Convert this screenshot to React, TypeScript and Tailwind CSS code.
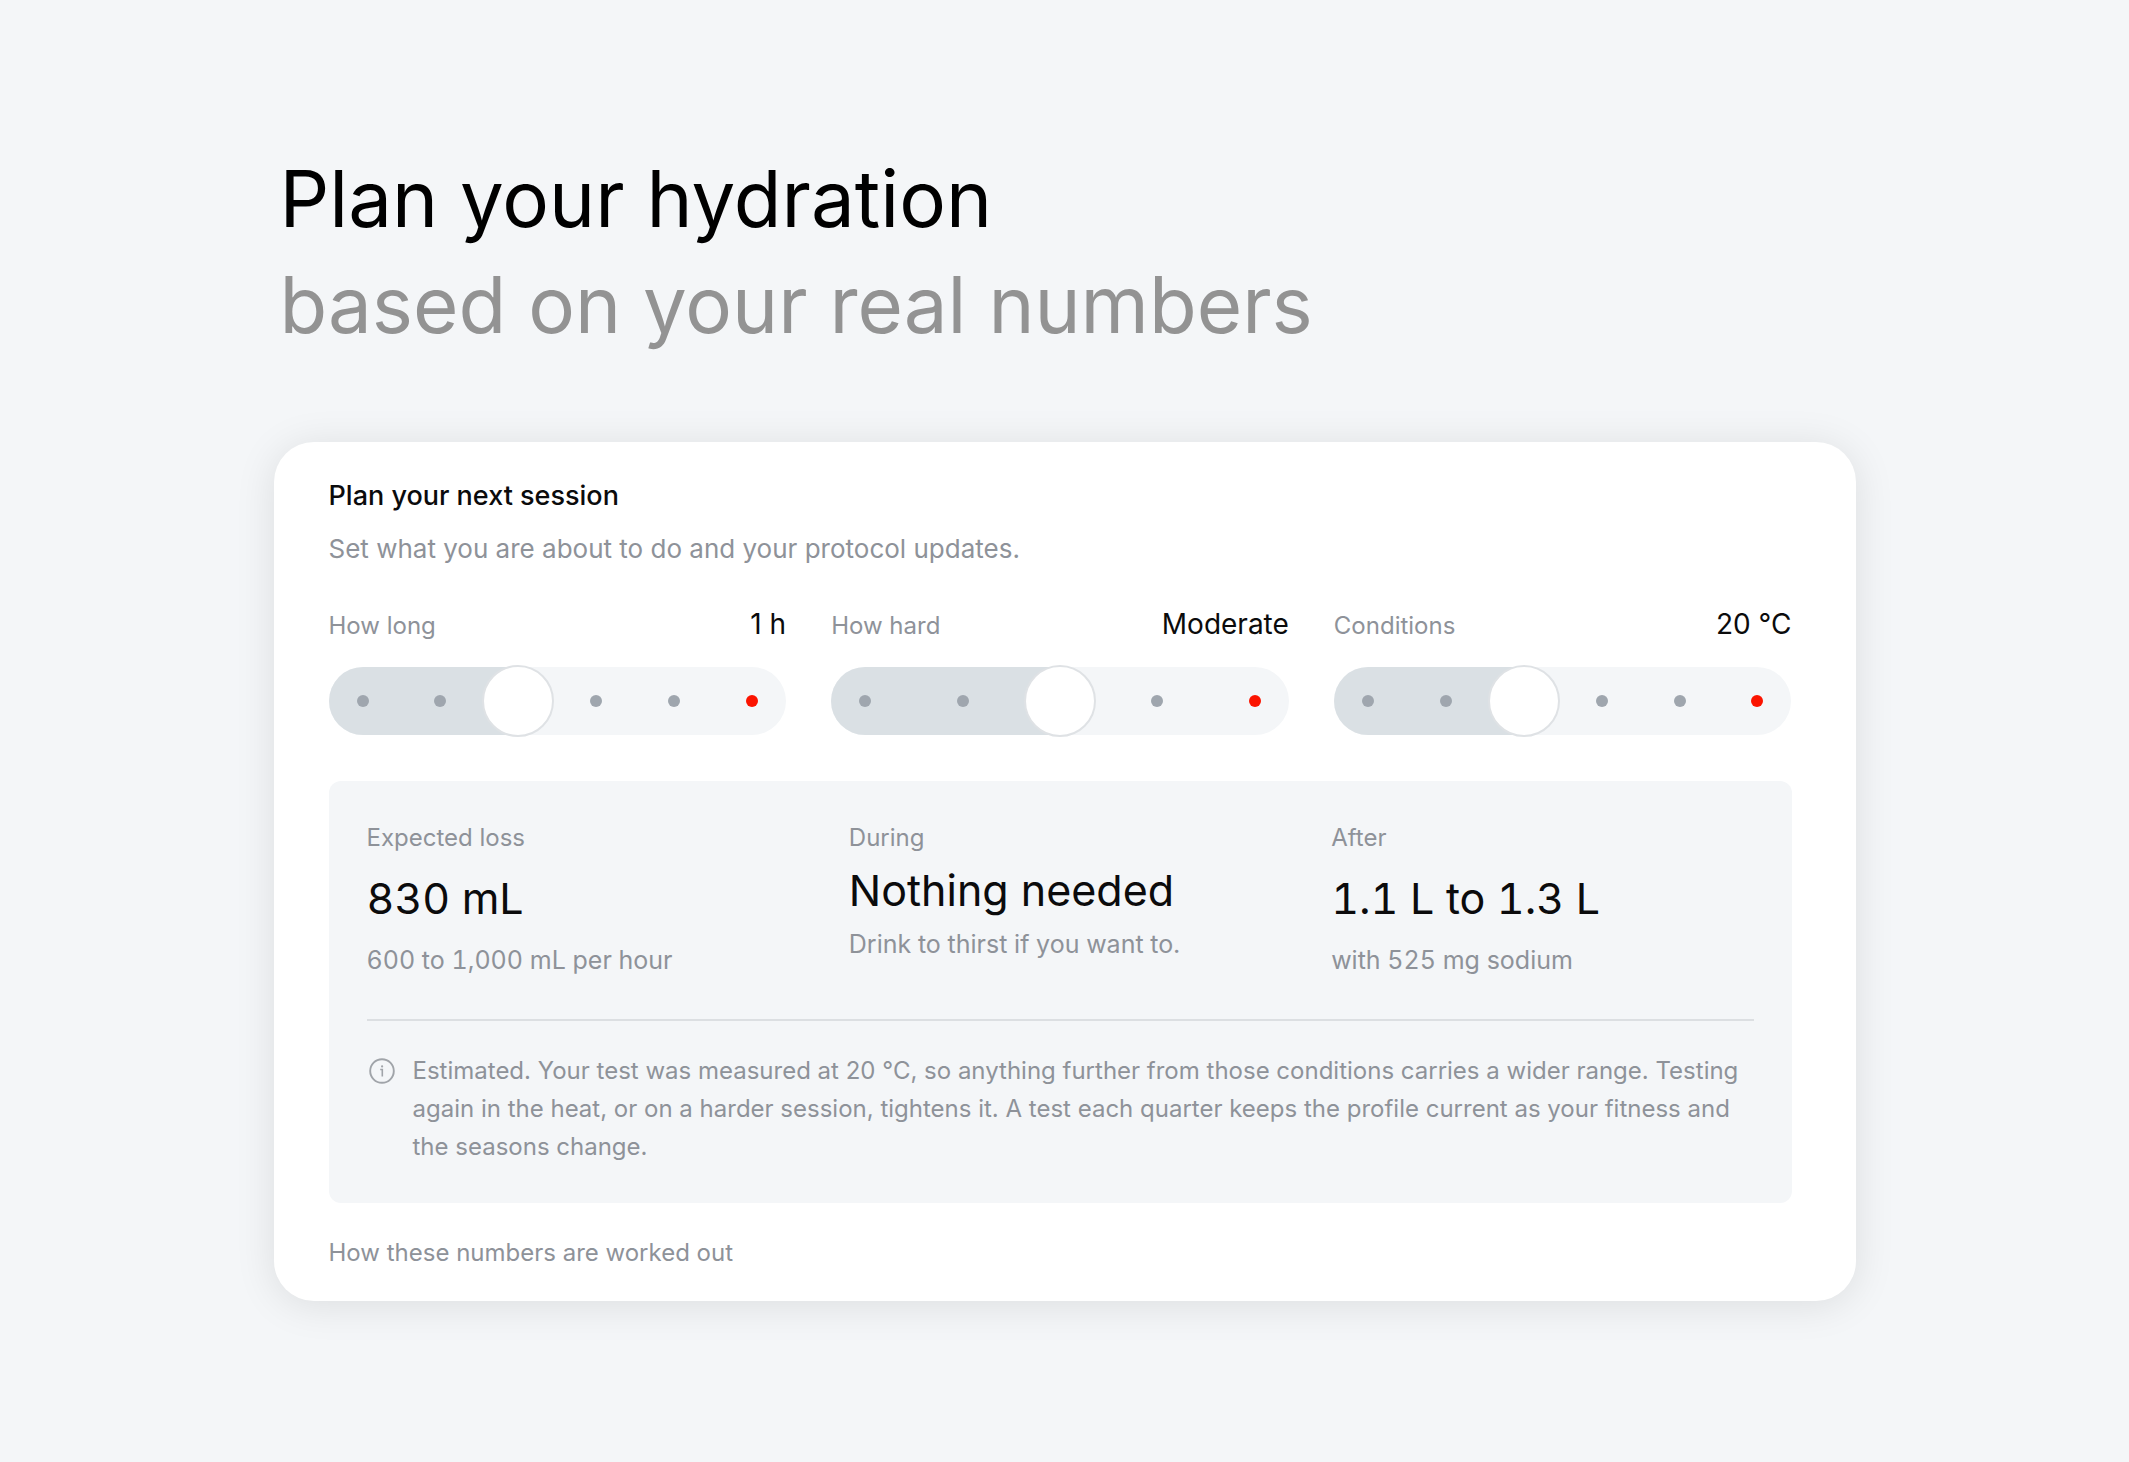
import React from "react";

interface StepSliderProps {
  id: string;
  label: string;
  steps: string[];
  value: number;
  onChange: (val: number) => void;
}

interface ResultProps {
  label: string;
  value: string;
  note: string;
  compact?: boolean;
}

const DURATIONS = ["20 min", "40 min", "1 h", "2 h", "3 h", "4 h"];
const EFFORTS = ["Very easy", "Easy", "Moderate", "Hard", "Very hard"];
const TEMPERATURES = ["10 °C", "15 °C", "20 °C", "25 °C", "30 °C", "35 °C"];

function StepSlider({ id, label, steps, value, onChange }: StepSliderProps) {
  const last = steps.length - 1;
  const ratio = value / last;

  return (
    <div>
      <div className="flex items-baseline justify-between leading-9">
        <label htmlFor={id} className="text-[24px] text-[#8e9299]">
          {label}
        </label>
        <output htmlFor={id} className="text-[28px] text-[#0b0b0c]">
          {steps[value]}
        </output>
      </div>

      <div className="relative mt-[23px] h-[68px] rounded-full bg-[#f4f6f8]">
        {/* filled part, ends under the thumb */}
        <div
          className="h-full rounded-l-full bg-[#dae0e4]"
          style={{ width: `calc(34px + (100% - 68px) * ${ratio})` }}
        />

        <div className="pointer-events-none absolute inset-0 flex items-center justify-between px-7">
          {steps.map((step, i) => (
            <span
              key={step}
              className={`size-3 rounded-full ${i === last ? "bg-[#fb1400]" : "bg-[#9fa6ae]"}`}
            />
          ))}
        </div>

        <input
          id={id}
          type="range"
          min={0}
          max={last}
          step={1}
          value={value}
          aria-valuetext={steps[value]}
          onChange={(e) => onChange(Number(e.target.value))}
          className="absolute -inset-0.5 cursor-pointer appearance-none bg-transparent [&::-webkit-slider-thumb]:size-[72px] [&::-webkit-slider-thumb]:appearance-none [&::-webkit-slider-thumb]:rounded-full [&::-webkit-slider-thumb]:border-2 [&::-webkit-slider-thumb]:border-[#dfe2e5] [&::-webkit-slider-thumb]:bg-white"
        />
      </div>
    </div>
  );
}

function Result({ label, value, note, compact }: ResultProps) {
  return (
    <div className="flex flex-col gap-3.5">
      <h3 className="text-[24px] leading-8 text-[#8e9299]">{label}</h3>
      <p
        className={`text-[43px] text-[#0b0b0c] ${
          compact ? "leading-[44px]" : "leading-[60px] tabular-nums"
        }`}
      >
        {value}
      </p>
      <p className="text-[25px] leading-9 text-[#8e9299] tabular-nums">{note}</p>
    </div>
  );
}

export default function App() {
  const [duration, setDuration] = React.useState(2);
  const [effort, setEffort] = React.useState(2);
  const [temperature, setTemperature] = React.useState(2);

  return (
    <main className="min-h-screen bg-[#f4f6f8] px-6 pt-[146px] pb-40 font-['Inter',sans-serif]">
      <div className="mx-auto max-w-[1582px]">
        <h1 className="pl-1.5 text-[78px] leading-[106px] text-black">
          Plan your hydration
          <span className="block text-[#939393]">based on your real numbers</span>
        </h1>

        <section className="mt-[84px] rounded-[40px] bg-white pt-[34px] pr-16 pb-8 pl-[55px] shadow-[0_4px_40px_rgba(0,0,0,0.1)]">
          <h2 className="text-[27px] leading-10 font-medium text-[#0b0b0c]">
            Plan your next session
          </h2>
          <p className="mt-[15px] text-[26px] leading-9 text-[#8e9299]">
            Set what you are about to do and your protocol updates.
          </p>

          <div className="mt-[39px] grid grid-cols-3 gap-x-[45px]">
            <StepSlider
              id="duration"
              label="How long"
              steps={DURATIONS}
              value={duration}
              onChange={setDuration}
            />
            <StepSlider
              id="effort"
              label="How hard"
              steps={EFFORTS}
              value={effort}
              onChange={setEffort}
            />
            <StepSlider
              id="temperature"
              label="Conditions"
              steps={TEMPERATURES}
              value={temperature}
              onChange={setTemperature}
            />
          </div>

          {/* RESULTS */}
          <div className="mt-[46px] rounded-xl bg-[#f4f6f8] px-[38px] pt-[41px] pb-[37px]">
            <div className="grid grid-cols-3 gap-x-[60px] pb-[41px]">
              <Result
                label="Expected loss"
                value="830 mL"
                note="600 to 1,000 mL per hour"
              />
              <Result
                label="During"
                value="Nothing needed"
                note="Drink to thirst if you want to."
                compact
              />
              <Result label="After" value="1.1 L to 1.3 L" note="with 525 mg sodium" />
            </div>

            <div className="flex gap-4 border-t-2 border-[#dcdfe2] pt-[31px]">
              <svg
                viewBox="0 0 30 30"
                className="mt-1 size-[30px] shrink-0 text-[#a0a4a9]"
                fill="none"
                stroke="currentColor"
                aria-hidden="true"
              >
                <circle cx="15" cy="15" r="11.8" strokeWidth="1.9" />
                <path d="M13.2 13.5h2.1V20.6" strokeWidth="1.6" />
                <circle cx="15.1" cy="10.4" r="1.1" fill="currentColor" stroke="none" />
              </svg>
              <p className="text-[24px] leading-[38px] text-[#8e9299]">
                Estimated. Your test was measured at 20 °C, so anything further from those
                conditions carries a wider range. Testing again in the heat, or on a harder
                session, tightens it. A test each quarter keeps the profile current as your
                fitness and the seasons change.
              </p>
            </div>
          </div>

          <button
            type="button"
            className="mt-[34px] block cursor-pointer text-left text-[24px] leading-8 text-[#8e9299]"
          >
            How these numbers are worked out
          </button>
        </section>
      </div>
    </main>
  );
}
